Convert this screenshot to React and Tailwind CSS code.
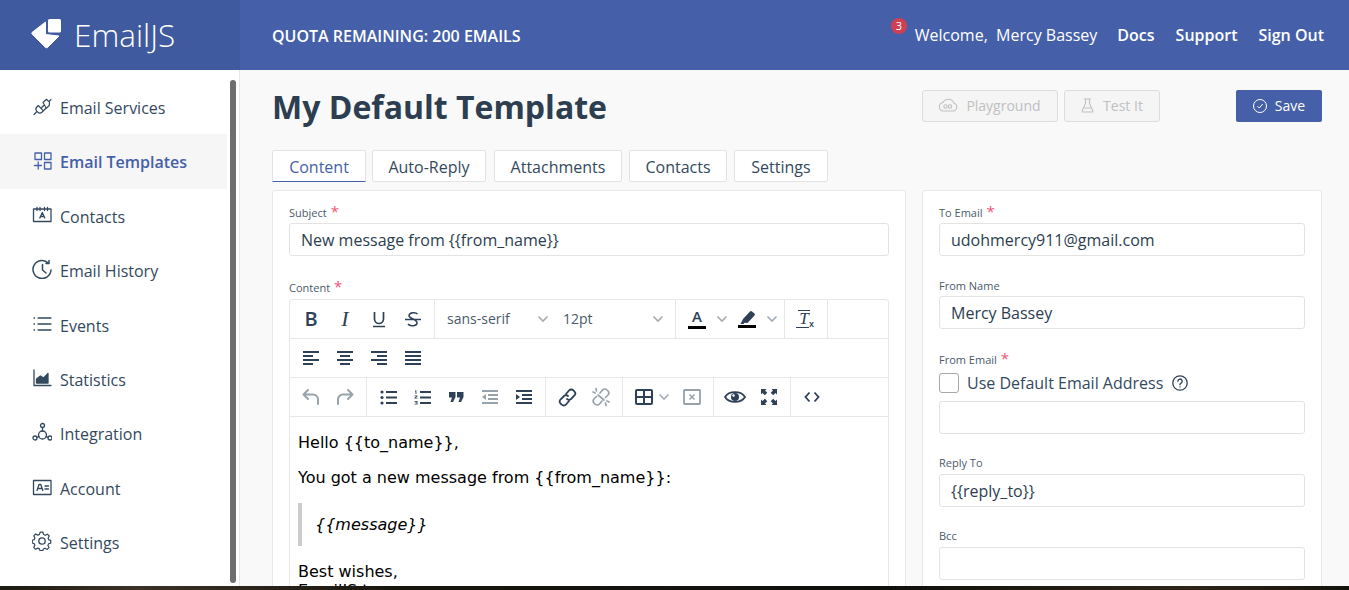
import React from "react";

const I = ({ w = 20, h, vb, className = "", children, sw = 1.3 }) => (
  <svg width={w} height={h || w} viewBox={vb || `0 0 ${w} ${h || w}`} fill="none" stroke="currentColor" strokeWidth={sw} strokeLinecap="round" strokeLinejoin="round" className={className}>
    {children}
  </svg>
);

const navItems = [
  ["Email Services", <I key="a" sw={1.2}><path d="M2 18.500l3-3M6.200 9.500l5.300 5.300-1.600 1.400a3 3 0 0 1-4.100-.1l-1-1a3 3 0 0 1 0-4.100zM9.700 11.500l2-2M12.200 14l2-2M11 6.500l3.500-3.200 3 2.800-.2 3.400-3 2.800zM17.500 5l1.500-1.500" /></I>],
  ["Email Templates", <I key="b" sw={1.3}><path d="M3 3h6.500v6.500H3zM12.500 3H19v6.500h-6.500zM12.500 12.500H19V19h-6.500zM6.200 12v7M2.500 15.500h7" /></I>],
  ["Contacts", <I key="c" sw={1.3}><path d="M1.500 4h17.500v12.500H1.500zM5 2.500v3M8 2.500v3M12.500 2.500v3M15.500 2.500v3M7.800 13l2.500-5.500 2.500 5.500M8.600 11.500h3.400" /></I>],
  ["Email History", <I key="d" sw={1.5}><path d="M16.500 4.200A9 9 0 1 0 19 11M17 1.500v3h-3M10.500 5.500V11l3.500 3" /></I>],
  ["Events", <I key="e"><path d="M6 4h13M6 10h13M6 16h13M2 4h.6M2 10h.6M2 16h.6" /></I>],
  ["Statistics", <I key="f"><path d="M2 2v15.500h17" /><path d="M4.500 15v-4l4-3 3 2 4.500-4.500V15z" fill="currentColor" /></I>],
  ["Integration", <I key="g" sw={1.3}><circle cx="10.500" cy="3.500" r="2" /><circle cx="3" cy="16" r="2" /><circle cx="18" cy="16" r="2" /><circle cx="10.500" cy="13" r="4" /><path d="M10.500 5.500V9M5 15.400l2-.9M16 15.400l-2-.9" /></I>],
  ["Account", <I key="h"><path d="M1.500 3.500H19v14H1.500zM5 13.500l2-6h1.800l2 6M5.800 11.500h4M13 9h3.500M13 12h3.500" /></I>],
  ["Settings", <I key="i"><path d="M8.500 1.500h3l.6 2.500 1.800.8 2.300-1.200 2 2-1.200 2.300.8 1.800 2 .6v3l-2.200.6-.8 1.800 1.200 2.300-2 2-2.300-1.200-1.800.8-.6 1.800h-3l-.6-2-1.800-.8-2.300 1.200-2-2 1.200-2.300-.8-1.800-2-.6v-3l2-.6.8-1.800-1.200-2.300 2-2 2.300 1.200 1.800-.8z" transform="scale(0.93) translate(0.3 -0.2)" /><circle cx="10" cy="10" r="3.200" /></I>],
];

const Nav = () => (
  <aside className="w-[240px] shrink-0 flex bg-white border-r border-[#e8e8e8]">
    <nav className="w-[227px] pt-[10px]">
      {navItems.map(([label, icon], i) => (
        <div key={label} className={`h-[54.4px] pt-[1.5px] flex items-center pl-[32px] text-[16px] ${i === 1 ? "bg-[#f6f6f6] text-[#4560a9] font-semibold" : "text-[#34495e]"}`}>
          <span className="w-[28px] shrink-0 -mt-[4px]">{icon}</span>
          <span>{label}</span>
        </div>
      ))}
    </nav>
    <div className="w-[6px] ml-[3px] mt-[10px] mb-[3px] rounded-full bg-[#6e6e6e]" />
  </aside>
);

const Label = ({ children, req }) => (
  <label className="flex items-start text-[11px] leading-[12px] text-[#4a5a6a] h-[14px]">
    {children}
    {req && <span className="ml-[4px] -mt-[3px] text-[15px] leading-[15px] text-[#f1557a]">*</span>}
  </label>
);

const Input = ({ value = "" }) => (
  <div className="h-[33px] rounded-[3px] bg-white border border-[#e3e3e3] flex items-center px-[11px] text-[16px] text-[#2c3e50]">{value}</div>
);

const Btn = ({ children }) => (
  <span className="h-[38px] w-[34px] flex items-center justify-center text-[#2f4156]">{children}</span>
);

const Chevron = ({ className = "" }) => (
  <svg width="12" height="8" viewBox="0 0 12 8" fill="none" stroke="currentColor" strokeWidth="1.600" className={`text-[#a3acb5] ${className}`}><path d="M1.500 1.500 6 6l4.500-4.500" /></svg>
);

const Group = ({ children, className = "" }) => (
  <div className={`flex items-center px-[4px] h-[38px] border-r border-[#e6e6e6] ${className}`}>{children}</div>
);

const Sv = ({ children, w = 20, h = 20 }) => (
  <svg width={w} height={h} viewBox={`0 0 ${w} ${h}`} fill="currentColor">{children}</svg>
);

const Lines = ({ rows }) => (
  <Sv w={16} h={14}>
    {rows.map(([x, y, wd], i) => <rect key={i} x={x} y={y} width={wd} height="2" />)}
  </Sv>
);

const Toolbar = () => (
  <div className="text-[14px] text-[#4a5a6a]">
    <div className="flex h-[39px] border-b border-[#e6e6e6]">
      <Group>
        <Btn><span className="font-semibold text-[20px] leading-none">B</span></Btn>
        <Btn><span className="font-['Liberation_Serif',serif] italic text-[22px] leading-none">I</span></Btn>
        <Btn><svg width="14" height="17" viewBox="0 0 14 17" fill="none" stroke="currentColor" strokeWidth="1.700"><path d="M2.500 1v7a4.500 4.500 0 0 0 9 0V1M1 15.500h12" /></svg></Btn>
        <Btn><svg width="18" height="17" viewBox="0 0 18 17" fill="none" stroke="currentColor" strokeWidth="1.500"><path d="M13.500 3C12 1 5.500 1 5 4.500 4.600 7.500 12.500 8 13 11.500c.5 3.500-7 4.500-9 1.500M1 8.500h16" /></svg></Btn>
      </Group>
      <Group>
        <span className="w-[116px] pl-[8px] pr-[6px] flex items-center justify-between"><span className="-translate-y-[1px]">sans-serif</span><Chevron /></span>
        <span className="w-[116px] pl-[8px] pr-[7px] flex items-center justify-between"><span className="-translate-y-[1px]">12pt</span><Chevron /></span>
      </Group>
      <Group>
        <span className="w-[50px] flex items-center">
          <span className="w-[34px] h-[38px] flex flex-col items-center justify-center text-[#2f4156]"><span className="font-semibold text-[15px] leading-[14px]">A</span><span className="w-[18px] h-[3px] mt-[3px] bg-black" /></span>
          <span className="w-[16px] flex justify-center"><Chevron /></span>
        </span>
        <span className="w-[50px] flex items-center">
          <span className="w-[34px] h-[38px] flex flex-col items-center justify-center text-[#2f4156]">
            <svg width="17" height="15" viewBox="0 0 17 15" fill="currentColor"><path d="M1.500 14 4 9l7-7.500a1.500 1.500 0 0 1 2 0L15.500 3.500a1.500 1.500 0 0 1 0 2L8.500 13l-3-.3-1 1.300z" /></svg>
            <span className="w-[18px] h-[3px] bg-black" />
          </span>
          <span className="w-[16px] flex justify-center"><Chevron /></span>
        </span>
      </Group>
      <Group>
        <Btn>
          <span className="flex items-end">
            <span className="flex flex-col items-center">
              <span className="font-['Liberation_Serif',serif] italic text-[17px] leading-[15px] border-t-[1.5px] border-[#2f4156] w-[12px] text-center">T</span>
              <span className="w-[13px] h-[1.5px] bg-[#2f4156] mt-[1px] -ml-[3px]" />
            </span>
            <span className="text-[9px] leading-[9px] -ml-[1px] font-semibold">x</span>
          </span>
        </Btn>
      </Group>
    </div>
    <div className="flex h-[39px] border-b border-[#e6e6e6] px-[4px] items-center">
      <Btn><Lines rows={[[0, 0, 16], [0, 4, 10], [0, 8, 16], [0, 12, 10]]} /></Btn>
      <Btn><Lines rows={[[0, 0, 16], [3, 4, 10], [0, 8, 16], [3, 12, 10]]} /></Btn>
      <Btn><Lines rows={[[0, 0, 16], [6, 4, 10], [0, 8, 16], [6, 12, 10]]} /></Btn>
      <Btn><Lines rows={[[0, 0, 16], [0, 4, 16], [0, 8, 16], [0, 12, 16]]} /></Btn>
    </div>
    <div className="flex h-[39px] border-b border-[#e6e6e6]">
      <Group>
        <Btn><svg width="18" height="18" viewBox="0 0 18 18" fill="none" stroke="#98a2ab" strokeWidth="2" strokeLinecap="round" strokeLinejoin="round"><path d="M6 2 1.500 6.500 6 11M2 6.500h9a5 5 0 0 1 5 5V16" /></svg></Btn>
        <Btn><svg width="18" height="18" viewBox="0 0 18 18" fill="none" stroke="#98a2ab" strokeWidth="2" strokeLinecap="round" strokeLinejoin="round"><path d="M12 2l4.500 4.500L12 11M16 6.500H7a5 5 0 0 0-5 5V16" /></svg></Btn>
      </Group>
      <Group>
        <Btn><Sv w={17} h={15}><circle cx="2" cy="2" r="1.600" /><circle cx="2" cy="7.500" r="1.600" /><circle cx="2" cy="13" r="1.600" /><rect x="6" y="1" width="11" height="2" /><rect x="6" y="6.500" width="11" height="2" /><rect x="6" y="12" width="11" height="2" /></Sv></Btn>
        <Btn>
          <svg width="17" height="15" viewBox="0 0 17 15" fill="currentColor">
            <path d="M1 .5h1.400v3.500h-.9V1.400H1z" />
            <path d="M.5 5.500h3v.8l-1.800 1.500h1.800v.8h-3v-.8l1.800-1.500H.5z" />
            <path d="M.5 11h3v3.500h-3v-.7h2.100v-.7H1v-.7h1.600v-.7H.5z" />
            <rect x="6" y="1" width="11" height="2" /><rect x="6" y="6.500" width="11" height="2" /><rect x="6" y="12" width="11" height="2" />
          </svg>
        </Btn>
        <Btn><Sv w={15} h={10}><path d="M0 0h6.500v5L4 10H1.500l1.500-4.500H0zM8 0h6.500v5L12 10H9.500L11 5.500H8z" /></Sv></Btn>
        <Btn><span className="text-[#98a2ab]"><Sv w={16} h={14}><rect x="0" y="0" width="16" height="2" /><rect x="6" y="4" width="10" height="2" /><rect x="6" y="8" width="10" height="2" /><rect x="0" y="12" width="16" height="2" /><path d="M0 7l4-3v6z" /></Sv></span></Btn>
        <Btn><Sv w={16} h={14}><rect x="0" y="0" width="16" height="2" /><rect x="6" y="4" width="10" height="2" /><rect x="6" y="8" width="10" height="2" /><rect x="0" y="12" width="16" height="2" /><path d="M4 7L0 4v6z" /></Sv></Btn>
      </Group>
      <Group>
        <Btn><svg width="19" height="19" viewBox="0 0 19 19" fill="none" stroke="currentColor" strokeWidth="1.800" strokeLinecap="round"><path d="M8 6l3-3.500a3 3 0 0 1 4.500 0l1 1a3 3 0 0 1 0 4L13 11a3 3 0 0 1-4 0M11 13l-3 3.500a3 3 0 0 1-4.500 0l-1-1a3 3 0 0 1 0-4L6 8a3 3 0 0 1 4 0" /></svg></Btn>
        <Btn><svg width="20" height="20" viewBox="0 0 20 20" fill="none" stroke="#98a2ab" strokeWidth="1.700" strokeLinecap="round"><path d="M9 6l2.500-3a3 3 0 0 1 4.500 0l1 1a3 3 0 0 1 0 4L14.500 10.500M11 14l-2.500 3a3 3 0 0 1-4.500 0l-1-1a3 3 0 0 1 0-4L5.500 9.500M2 5l2 1M5 1.500l.5 2.500M18 15l-2-1M15 18.500l-.5-2.500M7 8l6 5" /></svg></Btn>
      </Group>
      <Group>
        <span className="w-[48px] flex items-center">
          <span className="w-[34px] flex justify-center text-[#2f4156]"><svg width="18" height="16" viewBox="0 0 18 16" fill="none" stroke="currentColor" strokeWidth="2"><rect x="1" y="1" width="16" height="14" rx="1" /><path d="M1 8h16M9 1v14" /></svg></span>
          <span className="-ml-[4px] w-[14px] flex justify-center"><Chevron /></span>
        </span>
        <Btn><svg width="18" height="16" viewBox="0 0 18 16" fill="none" stroke="#98a2ab" strokeWidth="1.800"><rect x="1" y="1" width="16" height="14" rx="0.500" /><path d="M6.500 5.500l5 5M11.500 5.500l-5 5" strokeWidth="1.500" /></svg></Btn>
      </Group>
      <Group>
        <Btn><svg width="22" height="16" viewBox="0 0 22 16" fill="none" stroke="currentColor" strokeWidth="1.800"><path d="M1 8C5 1.500 17 1.500 21 8 17 14.500 5 14.500 1 8z" /><circle cx="11" cy="8" r="4" fill="currentColor" stroke="none" /><circle cx="9.500" cy="6.500" r="1.200" fill="#fff" stroke="none" /></svg></Btn>
        <Btn>
          <svg width="16" height="16" viewBox="0 0 16 16" fill="currentColor">
            {[0, 90, 180, 270].map((r) => (
              <path key={r} transform={`rotate(${r} 8 8)`} d="M0 0h5.500L4 1.500 6.300 3.800 3.800 6.300 1.500 4 0 5.500z" />
            ))}
          </svg>
        </Btn>
      </Group>
      <div className="flex items-center px-[4px] h-[38px]">
        <Btn><svg width="16" height="12" viewBox="0 0 16 12" fill="none" stroke="currentColor" strokeWidth="1.800"><path d="M5.500 1.500 1.500 6l4 4.500M10.500 1.500l4 4.500-4 4.500" /></svg></Btn>
      </div>
    </div>
  </div>
);

const Tab = ({ children, active, className = "" }) => (
  <div className={`h-[32px] pt-[2px] flex items-center justify-center text-[16px] rounded-t-[2px] bg-white border ${className} ${active ? "border-[#e3e3e3] border-b-[#4560a9] text-[#4560a9]" : "border-[#e3e3e3] rounded-b-[2px] text-[#34495e]"}`}>{children}</div>
);

export default function App() {
  return (
    <div className="w-[1349px] h-[590px] overflow-hidden flex flex-col font-['Open_Sans',sans-serif] bg-[#f9f9f9]">
      <header className="h-[70px] shrink-0 flex bg-[#4560a9] text-white">
        <div className="w-[240px] shrink-0 bg-[#3f5a9e] flex items-center pl-[31px]">
          <svg width="32" height="30" viewBox="0 0 32 30" fill="#fff" className="-mt-[2px]">
            <path d="M1 13.500 14.500 3v12.500l13.500 1.500-11 11a2 2 0 0 1-3 0L1.500 15.500a1.500 1.500 0 0 1-.5-2z" stroke="#fff" strokeLinejoin="round" />
            <rect x="17" y="0" width="13" height="13.500" rx="1.500" />
          </svg>
          <span className="ml-[11px] text-[31.5px] leading-none font-light">EmailJS</span>
        </div>
        <div className="flex-1 flex items-center pl-[32px] pr-[25px]">
          <span className="font-semibold text-[16px] translate-y-[1px]">QUOTA REMAINING: 200 EMAILS</span>
          <div className="ml-auto flex items-center text-[16px]">
            <div className="relative mr-[20px]">
              <span className="absolute -left-[24px] -top-[5px] w-[16px] h-[16px] rounded-full bg-[#cf4053] text-[11px] leading-[16px] text-center">3</span>
              <span>Welcome,&nbsp; Mercy Bassey</span>
            </div>
            <span className="font-semibold mr-[21px]">Docs</span>
            <span className="font-semibold mr-[21px]">Support</span>
            <span className="font-semibold">Sign Out</span>
          </div>
        </div>
      </header>
      <div className="h-[516px] flex overflow-hidden">
        <Nav />
        <main className="flex-1 pl-[32px] pr-[27px] pt-[20px] overflow-hidden">
          <div className="grid grid-cols-[634px_400px] gap-x-[16px]">
            <h1 className="h-[32px] pt-[2px] flex items-center text-[32px] font-bold text-[#2c3e50] leading-none">My Default Template</h1>
            <div className="flex items-center justify-between text-[14px]">
              <div className="flex gap-[6px]">
                <span className="h-[32px] w-[136px] pb-[2px] pr-[1px] flex items-center justify-center gap-[8px] rounded-[3px] border border-[#dcdcdc] bg-[#f5f5f5] text-[#c0c0c0]">
                  <svg width="20" height="14" viewBox="0 0 20 14" fill="none" stroke="currentColor" strokeWidth="1.100"><path d="M5 13h10a4 4 0 0 0 1-7.800A6 6 0 0 0 5 4.500 4.300 4.300 0 0 0 5 13z" /><circle cx="7.500" cy="8.500" r="1.700" /><circle cx="12" cy="8.500" r="1.700" /></svg>
                  Playground
                </span>
                <span className="h-[32px] w-[96px] pb-[2px] flex items-center justify-center gap-[9px] rounded-[3px] border border-[#dcdcdc] bg-[#f5f5f5] text-[#c0c0c0]">
                  <svg width="13" height="15" viewBox="0 0 13 15" fill="none" stroke="currentColor" strokeWidth="1.100"><path d="M3 1h7M4.500 1v4.500L1 13a1 1 0 0 0 1 1h9a1 1 0 0 0 1-1L8.500 5.500V1M3 10h7" /></svg>
                  Test It
                </span>
              </div>
              <span className="h-[32px] w-[86px] pb-[1px] flex items-center justify-center gap-[8px] rounded-[2px] bg-[#4560a9] text-white">
                <svg width="14" height="14" viewBox="0 0 14 14" fill="none" stroke="currentColor" strokeWidth="1"><circle cx="7" cy="7" r="6.500" /><path d="M4.500 7.200 6.300 9l3.400-4" /></svg>
                Save
              </span>
            </div>
          </div>
          <div className="flex mt-[28px]">
            <Tab active className="w-[94px]">Content</Tab>
            <Tab className="w-[114px] ml-[6px]">Auto-Reply</Tab>
            <Tab className="w-[128px] ml-[8px]">Attachments</Tab>
            <Tab className="w-[98px] ml-[7px]">Contacts</Tab>
            <Tab className="w-[94px] ml-[7px]">Settings</Tab>
          </div>
          <div className="grid grid-cols-[634px_400px] gap-x-[16px] mt-[8px]">
            <section className="h-[500px] bg-white border border-[#e8e8e8] rounded-t-[3px] px-[16px] pt-[16px]">
              <Label req>Subject</Label>
              <div className="mt-[2px]"><Input value="New message from {{from_name}}" /></div>
              <div className="mt-[26px]"><Label req>Content</Label></div>
              <div className="mt-[3px] border border-[#e6e6e6] rounded-t-[3px]">
                <Toolbar />
                <div className="px-[8px] text-[16px] leading-[19px] text-black font-['DejaVu_Sans',sans-serif]">
                  <p className="mt-[16px]">Hello {"{{to_name}},"}</p>
                  <p className="mt-[16px]">You got a new message from {"{{from_name}}:"}</p>
                  <blockquote className="mt-[16px] border-l-4 border-[#cccccc] pl-[13px] py-[12px] italic">{"{{message}}"}</blockquote>
                  <p className="mt-[16px]">Best wishes,<br />EmailJS team.</p>
                </div>
              </div>
            </section>
            <section className="h-[500px] bg-white border border-[#e8e8e8] rounded-t-[3px] px-[16px] pt-[16px]">
              <Label req>To Email</Label>
              <div className="mt-[2px]"><Input value="udohmercy911@gmail.com" /></div>
              <div className="mt-[24px]"><Label>From Name</Label></div>
              <div className="mt-[2px]"><Input value="Mercy Bassey" /></div>
              <div className="mt-[25px]"><Label req>From Email</Label></div>
              <div className="mt-[1px] h-[27px] flex items-center text-[16px] text-[#34495e]">
                <span className="w-[20px] h-[20px] rounded-[3px] bg-white border border-[#a8a8a8] mr-[8px]" />
                Use Default Email Address
                <svg width="16" height="16" viewBox="0 0 16 16" fill="none" stroke="#2f4156" strokeWidth="1.300" strokeLinecap="round" className="ml-[9px]"><circle cx="8" cy="8" r="7.200" /><path d="M5.800 6.200a2.200 2.200 0 1 1 3.300 1.900c-.8.500-1.100.9-1.100 1.700M8 11.800v.1" /></svg>
              </div>
              <div className="mt-[5px]"><Input /></div>
              <div className="mt-[23px]"><Label>Reply To</Label></div>
              <div className="mt-[3px]"><Input value="{{reply_to}}" /></div>
              <div className="mt-[23px]"><Label>Bcc</Label></div>
              <div className="mt-[3px]"><Input /></div>
            </section>
          </div>
        </main>
      </div>
      <div className="h-[4px] shrink-0 bg-[linear-gradient(90deg,#1c1a14_0%,#3a3226_10%,#17150f_30%,#0f0f0c_65%,#2d2619_88%,#15130e_100%)]" />
    </div>
  );
}
